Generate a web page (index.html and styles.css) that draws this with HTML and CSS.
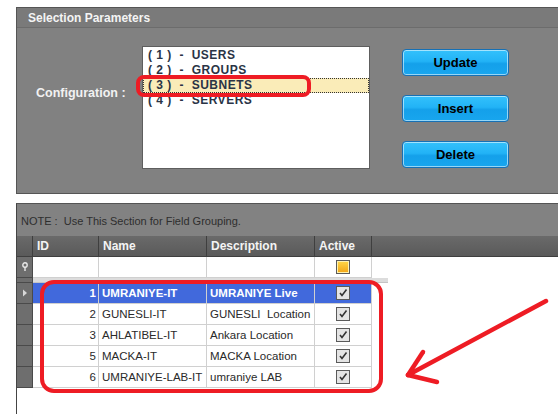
FILE: index.html
```html
<!DOCTYPE html>
<html>
<head>
<meta charset="utf-8">
<link rel="stylesheet" href="styles.css">
</head>
<body>
<div class="page">
  <section class="params">
    <div class="params-title">Selection Parameters</div>
    <div class="params-body">
      <div class="config-label">Configuration :</div>
      <div class="listbox">
        <div class="item">( 1 )  -  USERS</div>
        <div class="item">( 2 )  -  GROUPS</div>
        <div class="item selected">( 3 )  -  SUBNETS</div>
        <div class="item">( 4 )  -  SERVERS</div>
      </div>
      <div class="buttons">
        <div class="btn"><span class="btn-label">Update</span></div>
        <div class="btn"><span class="btn-label">Insert</span></div>
        <div class="btn"><span class="btn-label">Delete</span></div>
      </div>
    </div>
  </section>

  <section class="grid">
    <div class="note">NOTE :  Use This Section for Field Grouping.</div>
    <div class="row header">
      <div class="ind"></div>
      <div class="cell">ID</div>
      <div class="cell">Name</div>
      <div class="cell">Description</div>
      <div class="cell">Active</div>
      <div class="cell fill"></div>
    </div>
    <div class="row filter">
      <div class="ind"><svg width="8" height="10" viewBox="0 0 8 10"><circle cx="4" cy="3" r="2.2" fill="none" stroke="#e8e8e8" stroke-width="1.4"/><line x1="4" y1="5" x2="4" y2="9" stroke="#e8e8e8" stroke-width="1.4"/></svg></div>
      <div class="cell"></div>
      <div class="cell"></div>
      <div class="cell"></div>
      <div class="cell center"><span class="chk filter-chk"></span></div>
      <div class="cell fill"></div>
    </div>
    <div class="sep"><div class="ind"></div><div class="sep-line"></div></div>
    <div class="row data active">
      <div class="ind"><svg width="6" height="8" viewBox="0 0 6 8"><path d="M1 0.5 L5 4 L1 7.5 Z" fill="#d8d8d8"/></svg></div>
      <div class="cell num">1</div>
      <div class="cell">UMRANIYE-IT</div>
      <div class="cell">UMRANIYE Live</div>
      <div class="cell center"><span class="chk"><svg width="10" height="10" viewBox="0 0 10 10"><path d="M2 5 L4 7.5 L8.5 1.5" fill="none" stroke="#333" stroke-width="1.6"/></svg></span></div>
      <div class="cell fill"></div>
    </div>
    <div class="row data">
      <div class="ind"></div>
      <div class="cell num">2</div>
      <div class="cell">GUNESLI-IT</div>
      <div class="cell">GUNESLI  Location</div>
      <div class="cell center"><span class="chk"><svg width="10" height="10" viewBox="0 0 10 10"><path d="M2 5 L4 7.5 L8.5 1.5" fill="none" stroke="#333" stroke-width="1.6"/></svg></span></div>
      <div class="cell fill"></div>
    </div>
    <div class="row data">
      <div class="ind"></div>
      <div class="cell num">3</div>
      <div class="cell">AHLATIBEL-IT</div>
      <div class="cell">Ankara Location</div>
      <div class="cell center"><span class="chk"><svg width="10" height="10" viewBox="0 0 10 10"><path d="M2 5 L4 7.5 L8.5 1.5" fill="none" stroke="#333" stroke-width="1.6"/></svg></span></div>
      <div class="cell fill"></div>
    </div>
    <div class="row data">
      <div class="ind"></div>
      <div class="cell num">5</div>
      <div class="cell">MACKA-IT</div>
      <div class="cell">MACKA Location</div>
      <div class="cell center"><span class="chk"><svg width="10" height="10" viewBox="0 0 10 10"><path d="M2 5 L4 7.5 L8.5 1.5" fill="none" stroke="#333" stroke-width="1.6"/></svg></span></div>
      <div class="cell fill"></div>
    </div>
    <div class="row data">
      <div class="ind"></div>
      <div class="cell num">6</div>
      <div class="cell">UMRANIYE-LAB-IT</div>
      <div class="cell">umraniye LAB</div>
      <div class="cell center"><span class="chk"><svg width="10" height="10" viewBox="0 0 10 10"><path d="M2 5 L4 7.5 L8.5 1.5" fill="none" stroke="#333" stroke-width="1.6"/></svg></span></div>
      <div class="cell fill"></div>
    </div>
    <div class="grid-empty"></div>
  </section>

  <svg class="annotations" width="558" height="414" viewBox="0 0 558 414">
    <rect x="138" y="77" width="171" height="18" rx="6" ry="6" fill="none" stroke="#ee1c24" stroke-width="4"/>
    <rect x="42" y="282" width="339" height="109" rx="12" ry="12" fill="none" stroke="#ee1c24" stroke-width="4"/>
    <g stroke="#ee1c24" stroke-width="4.5" stroke-linecap="round" fill="none">
      <line x1="546" y1="301" x2="408" y2="375"/>
      <line x1="408" y1="375" x2="423" y2="352"/>
      <line x1="408" y1="375" x2="437" y2="382"/>
    </g>
  </svg>
</div>
</body>
</html>
```

FILE: styles.css
```css
* { box-sizing: border-box; }
html, body { margin: 0; padding: 0; background: #ffffff; }
body {
  width: 558px;
  height: 414px;
  overflow: hidden;
  font-family: "Liberation Sans", Arial, sans-serif;
}
.page {
  position: relative;
  width: 558px;
  height: 414px;
  padding-top: 7px;
  padding-left: 16px;
}
.params {
  width: 560px;
  height: 187px;
  border: 1px solid #555555;
  border-right: none;
  background: #818181;
  display: flex;
  flex-direction: column;
}
.params-title {
  height: 20px;
  background: #7a7a7a;
  border-bottom: 1px solid #6c6c6c;
  color: #f4f4f4;
  font-weight: bold;
  font-size: 12px;
  line-height: 20px;
  padding-left: 11px;
}
.params-body {
  display: flex;
  padding-top: 18px;
  padding-left: 19px;
}
.config-label {
  color: #f2f2f2;
  font-weight: bold;
  font-size: 12.5px;
  width: 106px;
  margin-top: 40px;
}
.listbox {
  width: 228px;
  height: 123px;
  background: #ffffff;
  border: 1px solid #5e5e5e;
  padding: 1px 0 0 0;
}
.item {
  white-space: pre;
  height: 15px;
  line-height: 14px;
  font-size: 12px;
  font-weight: bold;
  color: #2a3446;
  padding-left: 5px;
  letter-spacing: 0.5px;
}
.item.selected {
  background: #faecb8;
  border: 1px dotted #333;
  padding-left: 4px;
  line-height: 13px;
}
.buttons {
  display: flex;
  flex-direction: column;
  gap: 19px;
  margin-left: 32px;
  margin-top: 3px;
}
.btn {
  width: 107px;
  height: 27px;
  border: 1px solid #1670b5;
  border-radius: 4px;
  background: linear-gradient(#33c1fc 0%, #22b3f6 45%, #14a0ea 55%, #18a6ee 100%);
  box-shadow: inset 0 0 0 1px rgba(255,255,255,0.55);
  display: flex;
  align-items: center;
  justify-content: center;
  color: #000000;
}
.btn-label {
  color: #000000;
  font-weight: bold;
  font-size: 13px;
  -webkit-text-fill-color: #000000;
}
.grid {
  margin-top: 9px;
  width: 560px;
  height: 212px;
  border-top: 1px solid #555555;
  border-left: 1px solid #444444;
  display: flex;
  flex-direction: column;
}
.note {
  height: 32px;
  background: #828282;
  color: #2e2e2e;
  font-size: 11px;
  line-height: 34px;
  padding-left: 4px;
  white-space: pre;
}
.row {
  display: grid;
  grid-template-columns: 16px 66px 108px 108px 57px 1fr;
  height: 21px;
}
.ind {
  background: #6e6e6e;
  border-right: 1px solid #4a4a4a;
  border-bottom: 1px solid #4a4a4a;
  display: flex;
  align-items: center;
  justify-content: center;
}
.cell {
  border-right: 1px solid #d0d0d0;
  border-bottom: 1px solid #d0d0d0;
  font-size: 11.5px;
  line-height: 20px;
  padding-left: 3px;
  color: #2a2a2a;
  white-space: pre;
  overflow: hidden;
}
.cell.fill { border-right: none; }
.header .cell, .header .ind {
  background: linear-gradient(#6a6a6a, #5a5a5a);
  border-right: 1px solid #3f3f3f;
  border-bottom: 1px solid #3f3f3f;
  color: #f4f4f4;
  font-weight: bold;
  font-size: 12px;
  padding-left: 4px;
}
.header .ind { padding-left: 0; }
.header .cell.fill { border-right: none; }
.filter .cell { background: #ffffff; }
.filter .cell.fill { border-bottom: none; }
.data .cell.fill { border: none; background: #ffffff; }
.cell.num { text-align: right; padding-right: 2px; padding-left: 0; }
.cell.center { display: flex; align-items: center; justify-content: center; padding-left: 0; }
.active .cell { background: #4169dc; color: #ffffff; font-weight: bold; }
.active .cell.fill { background: #ffffff; }
.chk {
  width: 14px;
  height: 14px;
  border: 1px solid #5a5a5a;
  background: #e4e4e4;
  display: flex;
  align-items: center;
  justify-content: center;
}
.filter-chk {
  background: linear-gradient(#ffd84a, #f2a414);
  box-shadow: inset 0 0 0 1px #fff2b0;
}
.sep {
  display: grid;
  grid-template-columns: 16px 1fr;
  height: 5px;
}
.sep .ind { border-bottom: 1px solid #4a4a4a; }
.sep-line { background: #dcdcdc; border-bottom: 1px solid #c4c4c4; width: 355px; }
.grid-empty { flex: 1; background: #ffffff; }
.annotations {
  position: absolute;
  left: 0;
  top: 0;
  pointer-events: none;
}
```
